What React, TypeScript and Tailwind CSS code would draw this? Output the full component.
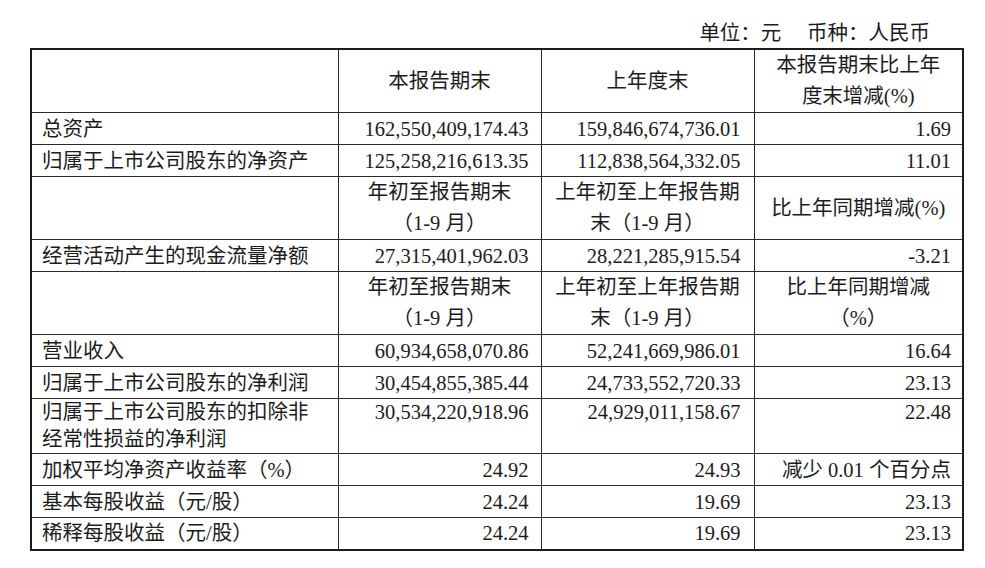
type Row = {
  label: string[];
  a: string;
  b: string;
  c: string;
  h: string;
};

// 每组的数据行
const balanceRows: Row[] = [
  { label: ["总资产"], a: "162,550,409,174.43", b: "159,846,674,736.01", c: "1.69", h: "h-[32px]" },
  { label: ["归属于上市公司股东的净资产"], a: "125,258,216,613.35", b: "112,838,564,332.05", c: "11.01", h: "h-[32px]" },
];

const cashRows: Row[] = [
  { label: ["经营活动产生的现金流量净额"], a: "27,315,401,962.03", b: "28,221,285,915.54", c: "-3.21", h: "h-[32px]" },
];

const profitRows: Row[] = [
  { label: ["营业收入"], a: "60,934,658,070.86", b: "52,241,669,986.01", c: "16.64", h: "h-[32px]" },
  { label: ["归属于上市公司股东的净利润"], a: "30,454,855,385.44", b: "24,733,552,720.33", c: "23.13", h: "h-[32px]" },
  {
    label: ["归属于上市公司股东的扣除非", "经常性损益的净利润"],
    a: "30,534,220,918.96",
    b: "24,929,011,158.67",
    c: "22.48",
    h: "h-[53px]",
  },
  { label: ["加权平均净资产收益率（%）"], a: "24.92", b: "24.93", c: "减少 0.01 个百分点", h: "h-[32px]" },
  { label: ["基本每股收益（元/股）"], a: "24.24", b: "19.69", c: "23.13", h: "h-[32px]" },
  { label: ["稀释每股收益（元/股）"], a: "24.24", b: "19.69", c: "23.13", h: "h-[32px]" },
];

const cell = "border border-[#2b2b2b] p-0";

const DataRow = ({ row }: { row: Row }) => {
  const multi = row.label.length > 1;
  const v = multi ? "align-top leading-[27px]" : "align-middle leading-[30px]";
  return (
    <tr>
      {/* 项目名称 */}
      <td className={`${cell} ${row.h} pl-[10px] text-left ${v}`}>
        {row.label.map((l) => (
          <div key={l}>{l}</div>
        ))}
      </td>
      <td className={`${cell} pr-[12px] text-right ${v}`}>{row.a}</td>
      <td className={`${cell} pr-[13px] text-right ${v}`}>{row.b}</td>
      <td className={`${cell} pr-[11px] text-right ${v}`}>{row.c}</td>
    </tr>
  );
};

const SubHeader = ({ last }: { last: string[] }) => (
  <tr>
    <td className={`${cell} h-[63px]`}></td>
    <td className={`${cell} text-center align-middle leading-[31px]`}>
      <div>年初至报告期末</div>
      <div>（1-9 月）</div>
    </td>
    <td className={`${cell} text-center align-middle leading-[31px]`}>
      <div>上年初至上年报告期</div>
      <div>末（1-9 月）</div>
    </td>
    <td className={`${cell} text-center align-middle leading-[31px]`}>
      {last.map((l) => (
        <div key={l}>{l}</div>
      ))}
    </td>
  </tr>
);

export default function App() {
  return (
    <div
      className="w-[985px] h-[568px] bg-white text-[#1c1c1c] text-[20.5px] overflow-hidden"
      style={{ fontFamily: '"Liberation Serif", "Noto Sans CJK SC", serif' }}
    >
      {/* 单位说明 */}
      <div className="h-[48px] pt-[18px] w-[962px] pr-[32px] text-right leading-[30px]">
        单位：元&nbsp;&nbsp;&nbsp;&nbsp;&nbsp;币种：人民币
      </div>

      <table className="ml-[30px] w-[932px] table-fixed border-collapse border-2 border-[#1c1c1c]">
        <colgroup>
          <col className="w-[307px]" />
          <col className="w-[203px]" />
          <col className="w-[213px]" />
          <col className="w-[209px]" />
        </colgroup>
        <tbody>
          <tr>
            <td className={`${cell} h-[62px]`}></td>
            <td className={`${cell} text-center align-middle`}>本报告期末</td>
            <td className={`${cell} text-center align-middle`}>上年度末</td>
            <td className={`${cell} text-center align-middle leading-[31px]`}>
              <div>本报告期末比上年</div>
              <div>度末增减(%)</div>
            </td>
          </tr>
          {balanceRows.map((r) => (
            <DataRow key={r.label[0]} row={r} />
          ))}
          <SubHeader last={["比上年同期增减(%)"]} />
          {cashRows.map((r) => (
            <DataRow key={r.label[0]} row={r} />
          ))}
          <SubHeader last={["比上年同期增减", "（%）"]} />
          {profitRows.map((r) => (
            <DataRow key={r.label[0]} row={r} />
          ))}
        </tbody>
      </table>
    </div>
  );
}
